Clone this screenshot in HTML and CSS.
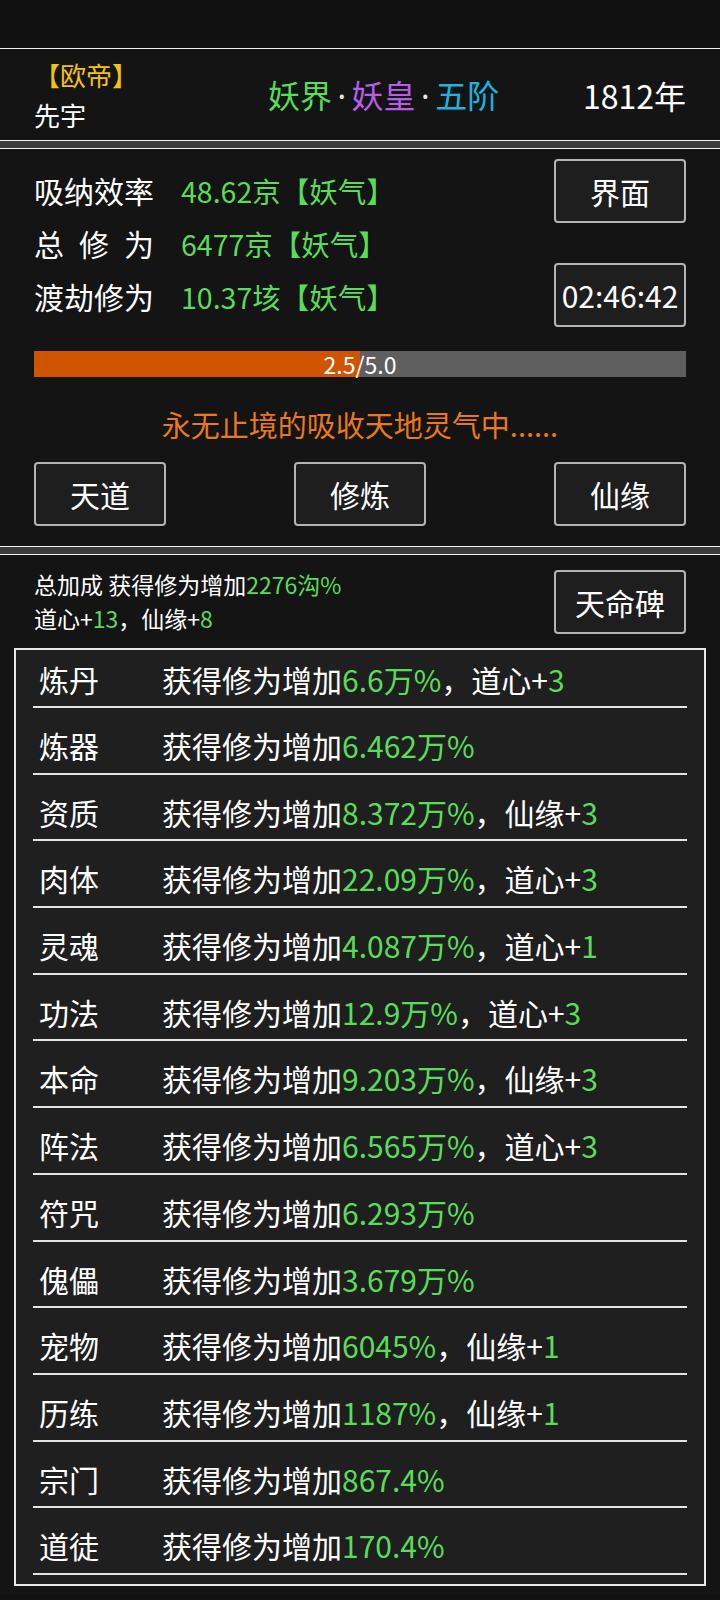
FILE: index.html
```html
<!DOCTYPE html>
<html lang="zh-CN">
<head>
<meta charset="utf-8">
<title>修炼</title>
<link rel="stylesheet" href="styles.css">
</head>
<body>
<div class="statusbar"></div>

<section class="panel header">
  <div class="identity">
    <div class="badge">【欧帝】</div>
    <div class="name">先宇</div>
  </div>
  <div class="realm"><span class="g">妖界</span><span class="dot">·</span><span class="p">妖皇</span><span class="dot">·</span><span class="c">五阶</span></div>
  <div class="year">1812年</div>
</section>

<div class="gap"></div>

<section class="panel cultivate">
  <div class="top">
    <div class="stats">
      <div class="stat"><span class="label">吸纳效率</span><span class="value">48.62京【妖气】</span></div>
      <div class="stat"><span class="label spaced"><span>总</span><span>修</span><span>为</span></span><span class="value">6477京【妖气】</span></div>
      <div class="stat"><span class="label">渡劫修为</span><span class="value">10.37垓【妖气】</span></div>
    </div>
    <div class="side">
      <button class="btn">界面</button>
      <button class="btn">02:46:42</button>
    </div>
  </div>
  <div class="progress">
    <div class="fill" style="width:50%"></div>
    <span class="ptext">2.5/5.0</span>
  </div>
  <div class="message">永无止境的吸收天地灵气中......</div>
  <div class="actions">
    <button class="btn">天道</button>
    <button class="btn">修炼</button>
    <button class="btn">仙缘</button>
  </div>
</section>

<div class="gap"></div>

<section class="panel bonus">
  <div class="bonus-top">
    <div class="summary">
      <div>总加成 获得修为增加<span class="g">2276沟%</span></div>
      <div>道心+<span class="g">13</span>，仙缘+<span class="g">8</span></div>
    </div>
    <button class="btn">天命碑</button>
  </div>
  <div class="list">
    <div class="row"><span class="name">炼丹</span><span class="desc">获得修为增加<span class="g">6.6万%</span>，道心+<span class="g">3</span></span></div>
    <div class="row"><span class="name">炼器</span><span class="desc">获得修为增加<span class="g">6.462万%</span></span></div>
    <div class="row"><span class="name">资质</span><span class="desc">获得修为增加<span class="g">8.372万%</span>，仙缘+<span class="g">3</span></span></div>
    <div class="row"><span class="name">肉体</span><span class="desc">获得修为增加<span class="g">22.09万%</span>，道心+<span class="g">3</span></span></div>
    <div class="row"><span class="name">灵魂</span><span class="desc">获得修为增加<span class="g">4.087万%</span>，道心+<span class="g">1</span></span></div>
    <div class="row"><span class="name">功法</span><span class="desc">获得修为增加<span class="g">12.9万%</span>，道心+<span class="g">3</span></span></div>
    <div class="row"><span class="name">本命</span><span class="desc">获得修为增加<span class="g">9.203万%</span>，仙缘+<span class="g">3</span></span></div>
    <div class="row"><span class="name">阵法</span><span class="desc">获得修为增加<span class="g">6.565万%</span>，道心+<span class="g">3</span></span></div>
    <div class="row"><span class="name">符咒</span><span class="desc">获得修为增加<span class="g">6.293万%</span></span></div>
    <div class="row"><span class="name">傀儡</span><span class="desc">获得修为增加<span class="g">3.679万%</span></span></div>
    <div class="row"><span class="name">宠物</span><span class="desc">获得修为增加<span class="g">6045%</span>，仙缘+<span class="g">1</span></span></div>
    <div class="row"><span class="name">历练</span><span class="desc">获得修为增加<span class="g">1187%</span>，仙缘+<span class="g">1</span></span></div>
    <div class="row"><span class="name">宗门</span><span class="desc">获得修为增加<span class="g">867.4%</span></span></div>
    <div class="row"><span class="name">道徒</span><span class="desc">获得修为增加<span class="g">170.4%</span></span></div>
  </div>
</section>
</body>
</html>
```

FILE: styles.css
```css
* {
  box-sizing: border-box;
}

body {
  margin: 0;
  width: 720px;
  background: #111111;
  color: #ffffff;
  font-family: "Noto Sans CJK SC", "Noto Sans", sans-serif;
}

.statusbar {
  height: 48px;
  background: #111111;
}

.panel {
  background: #141414;
  border-top: 1px solid #f0f0f0;
  border-bottom: 1px solid #f0f0f0;
}

.gap {
  height: 7px;
  background: #3b3b3b;
}

.g { color: #59dd59; }
.p { color: #b45fe6; }
.c { color: #1fb2de; }

/* header */
.header {
  height: 93px;
  padding: 0 34px;
  display: grid;
  grid-template-columns: 234px auto 1fr;
  align-items: center;
}

.identity {
  font-size: 26px;
  line-height: 39.5px;
}

.badge {
  color: #f4c20d;
}

.realm {
  font-size: 32px;
  line-height: 44px;
}

.dot {
  margin: 0 5.5px;
  color: #e8e8e8;
  font-family: "Noto Sans", sans-serif;
}

.year {
  justify-self: end;
  font-size: 32px;
  line-height: 44px;
}

/* cultivation panel */
.cultivate {
  padding: 10px 34px 20px;
}

.top {
  display: flex;
  justify-content: space-between;
  align-items: center;
}

.stats {
  line-height: 52px;
}

.stat {
  display: flex;
  align-items: baseline;
}

.label {
  width: 120px;
  font-size: 30px;
}

.label.spaced {
  display: flex;
  justify-content: space-between;
}

.value {
  margin-left: 27px;
  color: #59dd59;
  font-size: 28.5px;
}

.side {
  display: flex;
  flex-direction: column;
  gap: 40px;
}

.btn {
  width: 132px;
  height: 64px;
  padding: 0;
  background: #1e1e1e;
  border: 2px solid #b4b4b4;
  border-radius: 4px;
  color: #ffffff;
  font-family: inherit;
  font-size: 30px;
  line-height: 1;
}

.progress {
  margin-top: 24px;
  height: 26px;
  background: #5f5f5f;
  display: grid;
}

.progress > * {
  grid-area: 1 / 1;
}

.fill {
  height: 100%;
  background: #d05400;
}

.ptext {
  justify-self: center;
  align-self: center;
  font-size: 23px;
  line-height: 26px;
}

.message {
  margin-top: 27px;
  text-align: center;
  color: #e8791c;
  font-size: 29px;
  line-height: 40px;
}

.actions {
  margin-top: 18px;
  display: flex;
  justify-content: space-between;
}

/* bonus panel */
.bonus {
  padding: 13px 0 9px;
  border-bottom: none;
}

.bonus-top {
  display: flex;
  justify-content: space-between;
  align-items: center;
  padding: 0 34px;
}

.summary {
  font-size: 23px;
  line-height: 33.5px;
}

.list {
  margin: 13px 14px 0;
  padding: 0 17px 9px;
  border: 2px solid #e8e8e8;
  background: #1f1f1f;
}

.row {
  display: grid;
  grid-template-columns: 123px 1fr;
  height: 66.7px;
  padding: 17px 6px 0;
  border-bottom: 2px solid #e4e4e4;
  font-size: 30px;
  line-height: 40px;
}

.row:first-child {
  height: 58px;
  padding-top: 9px;
}
```
